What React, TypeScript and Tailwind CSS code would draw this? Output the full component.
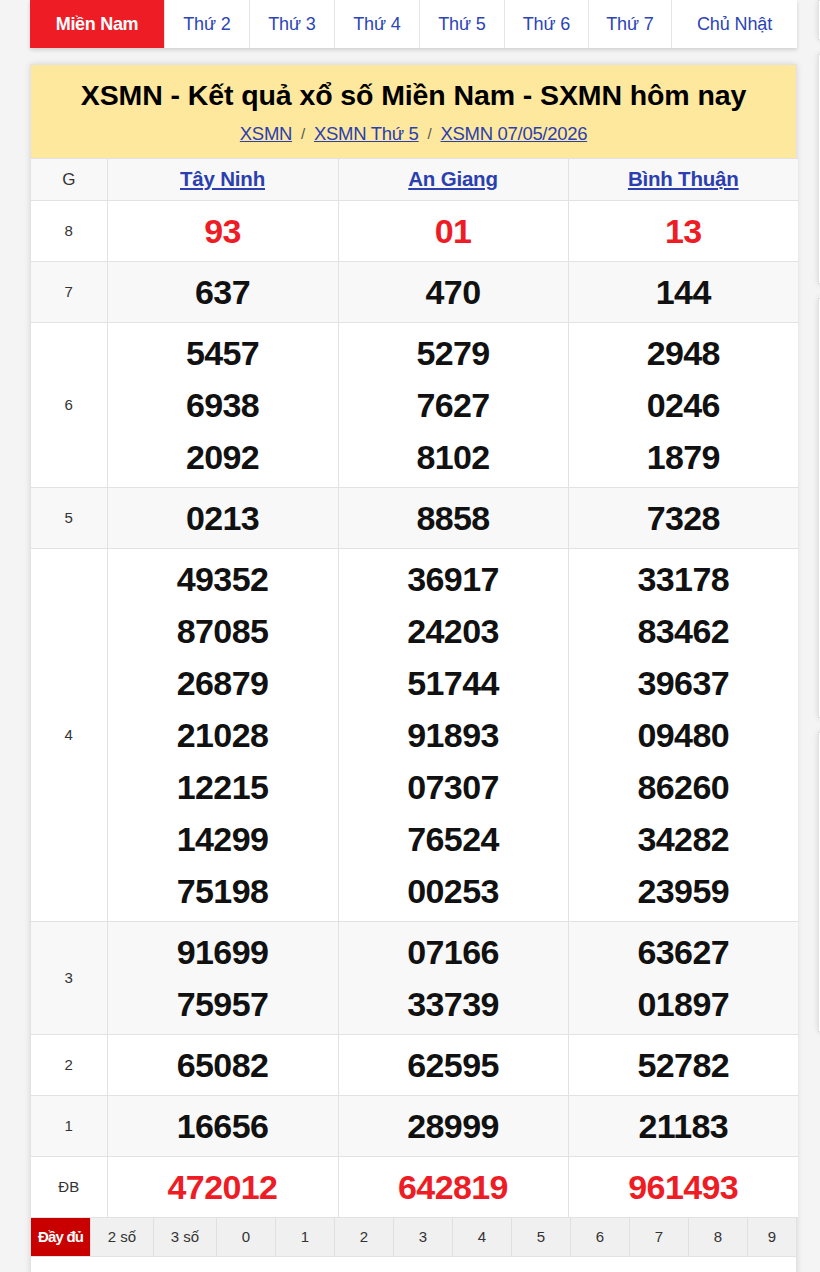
import React from "react";

const tabs = ["Thứ 2", "Thứ 3", "Thứ 4", "Thứ 5", "Thứ 6", "Thứ 7", "Chủ Nhật"];
const tabWidths = ["w-[85px]", "w-[85px]", "w-[85px]", "w-[85px]", "w-[84px]", "w-[83px]", "flex-1"];

const provinces = ["Tây Ninh", "An Giang", "Bình Thuận"];

type Row = { label: string; values: string[][]; red?: boolean; gray?: boolean };

const rows: Row[] = [
    { label: "8", values: [["93"], ["01"], ["13"]], red: true },
    { label: "7", values: [["637"], ["470"], ["144"]], gray: true },
    { label: "6", values: [["5457", "6938", "2092"], ["5279", "7627", "8102"], ["2948", "0246", "1879"]] },
    { label: "5", values: [["0213"], ["8858"], ["7328"]], gray: true },
    {
        label: "4",
        values: [
            ["49352", "87085", "26879", "21028", "12215", "14299", "75198"],
            ["36917", "24203", "51744", "91893", "07307", "76524", "00253"],
            ["33178", "83462", "39637", "09480", "86260", "34282", "23959"],
        ],
    },
    { label: "3", values: [["91699", "75957"], ["07166", "33739"], ["63627", "01897"]], gray: true },
    { label: "2", values: [["65082"], ["62595"], ["52782"]] },
    { label: "1", values: [["16656"], ["28999"], ["21183"]], gray: true },
    { label: "ĐB", values: [["472012"], ["642819"], ["961493"]], red: true },
];

const filters = [
    { label: "2 số", w: "w-[63px]" },
    { label: "3 số", w: "w-[63px]" },
    { label: "0", w: "w-[59px]" },
    { label: "1", w: "w-[59px]" },
    { label: "2", w: "w-[59px]" },
    { label: "3", w: "w-[59px]" },
    { label: "4", w: "w-[59px]" },
    { label: "5", w: "w-[59px]" },
    { label: "6", w: "w-[59px]" },
    { label: "7", w: "w-[59px]" },
    { label: "8", w: "w-[59px]" },
    { label: "9", w: "flex-1" },
];

export default function App() {
    return (
        <div className="min-h-[1272px] bg-[#f4f4f4] font-['Liberation_Sans',Arial,sans-serif] overflow-hidden">
            <div className="flex pl-[30px]">
                <div className="w-[767px] shrink-0">
                    {/* day tabs */}
                    <div className="flex h-[48px] bg-white shadow-[0_2px_4px_rgba(0,0,0,0.15)]">
                        <div className="w-[134px] flex items-center justify-center bg-[#ee1c25] text-white text-[18px] font-bold tracking-[-0.3px]">
                            Miền Nam
                        </div>
                        {tabs.map((t, i) => (
                            <div
                                key={t}
                                className={`${tabWidths[i]} flex items-center justify-center border-l border-[#e4e4e4] text-[18px] text-[#2b44b8] tracking-[-0.1px]`}
                            >
                                {t}
                            </div>
                        ))}
                    </div>

                    {/* result card */}
                    <div className="mt-[16px] bg-white border border-[#e2e2e2] shadow-[0_0_6px_rgba(0,0,0,0.12)]">
                        <div className="h-[93px] bg-[#fee89e] flex flex-col items-center pt-[12px]">
                            <h1 className="text-[28.5px] font-bold text-black leading-[36px] tracking-[-0.1px]">
                                XSMN - Kết quả xổ số Miền Nam - SXMN hôm nay
                            </h1>
                            <div className="mt-[7px] text-[18.5px] text-[#2b3fb0] tracking-[-0.3px] flex items-center gap-[9px]">
                                <span className="underline">XSMN</span>
                                <span className="text-[#555] text-[15px]">/</span>
                                <span className="underline">XSMN Thứ 5</span>
                                <span className="text-[#555] text-[15px]">/</span>
                                <span className="underline">XSMN 07/05/2026</span>
                            </div>
                        </div>

                        <table className="w-full border-collapse table-fixed">
                            <colgroup>
                                <col className="w-[76px]" />
                                <col className="w-[231px]" />
                                <col className="w-[230px]" />
                                <col className="w-[230px]" />
                            </colgroup>
                            <thead>
                                <tr className="h-[42px] bg-[#f8f8f8]">
                                    <th className="border border-[#e2e2e2] border-l-0 text-[17px] font-normal text-[#333]">G</th>
                                    {provinces.map((p) => (
                                        <th
                                            key={p}
                                            className="border border-[#e2e2e2] border-r-0 text-[20.5px] font-bold text-[#2b3fb0] underline tracking-[-0.2px]"
                                        >
                                            {p}
                                        </th>
                                    ))}
                                </tr>
                            </thead>
                            <tbody>
                                {rows.map((r) => (
                                    <tr key={r.label} className={r.gray ? "bg-[#f8f8f8]" : "bg-white"}>
                                        <td className="border border-[#e2e2e2] border-l-0 text-center text-[15px] text-[#333]">
                                            {r.label}
                                        </td>
                                        {r.values.map((col, ci) => (
                                            <td
                                                key={ci}
                                                className="border border-[#e2e2e2] border-r-0 text-center py-[4px] px-0 align-middle"
                                            >
                                                {col.map((n, ni) => (
                                                    <div
                                                        key={ni}
                                                        className={`leading-[52px] font-bold text-[34px] tracking-[-0.6px] ${
                                                            r.red ? "text-[#ee1c25]" : "text-[#111]"
                                                        }`}
                                                    >
                                                        {n}
                                                    </div>
                                                ))}
                                            </td>
                                        ))}
                                    </tr>
                                ))}
                            </tbody>
                        </table>

                        {/* digit filter bar */}
                        <div className="flex h-[39px] bg-[#f0f0f0] border-b border-[#e2e2e2]">
                            <div className="w-[59px] flex items-center justify-center bg-[#c80000] text-white text-[15px] font-bold tracking-[-0.8px]">
                                Đầy đủ
                            </div>
                            {filters.map((f) => (
                                <div
                                    key={f.label + f.w}
                                    className={`${f.w} flex items-center justify-center border-l border-[#e0e0e0] text-[15px] text-[#333]`}
                                >
                                    {f.label}
                                </div>
                            ))}
                        </div>
                        <div className="h-[40px] bg-white" />
                    </div>
                </div>

                {/* sidebar edge */}
                <div className="ml-[21px] w-[300px] shrink-0 flex flex-col gap-[14px]">
                    <div className="h-[40px] bg-white border border-[#e2e2e2] shadow-[0_0_6px_rgba(0,0,0,0.12)]" />
                    <div className="h-[230px] bg-white border border-[#e2e2e2] shadow-[0_0_6px_rgba(0,0,0,0.12)]" />
                    <div className="h-[420px] bg-white border border-[#e2e2e2] shadow-[0_0_6px_rgba(0,0,0,0.12)]" />
                    <div className="h-[300px] bg-white border border-[#e2e2e2] shadow-[0_0_6px_rgba(0,0,0,0.12)]" />
                </div>
            </div>
        </div>
    );
}
